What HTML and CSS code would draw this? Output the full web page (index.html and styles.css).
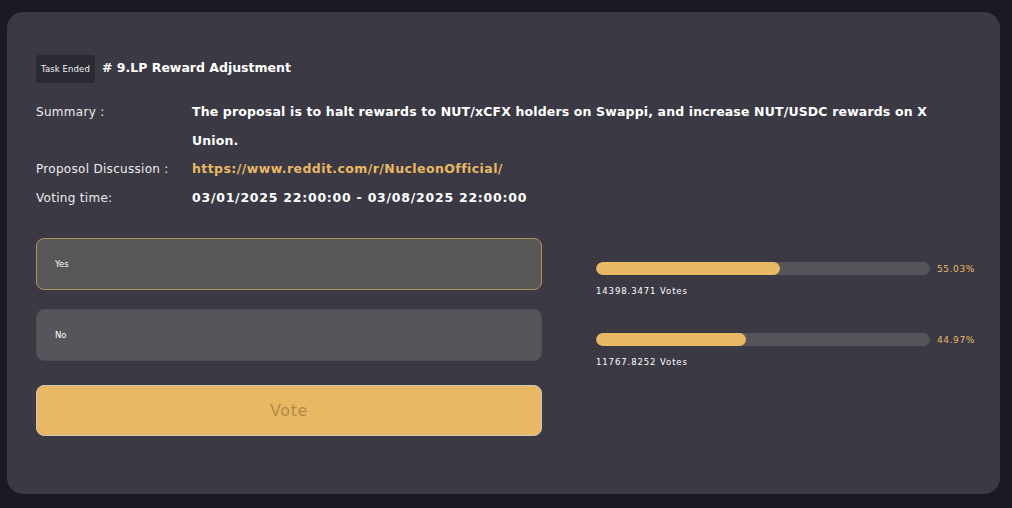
FILE: index.html
```html
<!DOCTYPE html>
<html>
<head>
<meta charset="utf-8">
<link rel="stylesheet" href="styles.css">
</head>
<body>
<div class="card">
  <div class="head">
    <span class="badge">Task Ended</span>
    <span class="title"># 9.LP Reward Adjustment</span>
  </div>
  <div class="info">
    <div class="label">Summary :</div>
    <div class="value">The proposal is to halt rewards to NUT/xCFX holders on Swappi, and increase NUT/USDC rewards on X Union.</div>
    <div class="label">Proposol Discussion :</div>
    <div class="value link">https://www.reddit.com/r/NucleonOfficial/</div>
    <div class="label">Voting time:</div>
    <div class="value time">03/01/2025 22:00:00 - 03/08/2025 22:00:00</div>
  </div>
  <div class="vote-area">
    <div class="options">
      <div class="option selected">Yes</div>
      <div class="option">No</div>
      <button class="vote-btn">Vote</button>
    </div>
    <div class="results">
      <div class="result">
        <div class="bar-row">
          <div class="track"><div class="fill" style="width:55.03%"></div></div>
          <span class="pct">55.03%</span>
        </div>
        <div class="votes">14398.3471 Votes</div>
      </div>
      <div class="result">
        <div class="bar-row">
          <div class="track"><div class="fill" style="width:44.97%"></div></div>
          <span class="pct">44.97%</span>
        </div>
        <div class="votes">11767.8252 Votes</div>
      </div>
    </div>
  </div>
</div>
</body>
</html>
```
FILE: styles.css
```css
* { box-sizing: border-box; }
html, body { margin: 0; padding: 0; }
body {
  background: #1b1922;
  width: 1012px;
  height: 508px;
  padding: 12px 12px 14px 7px;
  font-family: "DejaVu Sans", "Liberation Sans", sans-serif;
  color: #ffffff;
  overflow: hidden;
}
.card {
  width: 993px;
  height: 482px;
  background: #3b3a44;
  border-radius: 16px;
  padding: 43px 29px 0 29px;
}
.head {
  display: flex;
  align-items: center;
  gap: 7px;
}
.badge {
  background: #2b2a32;
  border-radius: 3px;
  width: 59px;
  height: 28px;
  display: flex;
  align-items: center;
  justify-content: center;
  font-size: 8.5px;
  letter-spacing: 0.1px;
  color: #f2f2f2;
}
.title {
  font-size: 12.5px;
  font-weight: bold;
  letter-spacing: 0px;
  margin-top: -3px;
}
.info {
  display: grid;
  grid-template-columns: 156px 1fr;
  margin-top: 15px;
  line-height: 28.5px;
}
.label {
  font-size: 12px;
  color: #ececec;
  letter-spacing: 0.3px;
}
.value {
  font-size: 12.5px;
  font-weight: bold;
  letter-spacing: 0.15px;
  padding-right: 20px;
}
.value.link { color: #e9b865; letter-spacing: 0.42px; }
.value.time { letter-spacing: 0.75px; }
.vote-area {
  display: flex;
  margin-top: 26px;
}
.options {
  width: 506px;
  flex-shrink: 0;
  display: flex;
  flex-direction: column;
}
.option {
  height: 52px;
  border-radius: 8px;
  background: #55565b;
  border: 1px solid #4d4e54;
  display: flex;
  align-items: center;
  padding-left: 18px;
  font-size: 8.5px;
  margin-bottom: 19px;
}
.option.selected {
  background: #575757;
  border-color: #b18f59;
}
.vote-btn {
  margin-top: 5px;
  height: 51px;
  border-radius: 8px;
  background: #e9b865;
  border: 1px solid #cfc6b6;
  color: #b28c46;
  font-family: "DejaVu Sans", "Liberation Sans", sans-serif;
  font-size: 16px;
  letter-spacing: 0.6px;
  padding: 0;
}
.results {
  margin-left: 54px;
  width: 375px;
  flex-shrink: 0;
  display: flex;
  flex-direction: column;
}
.result {
  height: 71px;
  padding-top: 24px;
}
.bar-row {
  display: flex;
  align-items: center;
  height: 13px;
}
.track {
  width: 334px;
  height: 13px;
  border-radius: 7px;
  background: #54555a;
  overflow: hidden;
  flex-shrink: 0;
}
.fill {
  height: 100%;
  background: #e9b865;
  border-radius: 7px;
}
.pct {
  margin-left: 7px;
  font-size: 9px;
  letter-spacing: 0.6px;
  color: #e9b865;
}
.votes {
  margin-top: 11px;
  font-size: 8.5px;
  letter-spacing: 0.9px;
}
```
